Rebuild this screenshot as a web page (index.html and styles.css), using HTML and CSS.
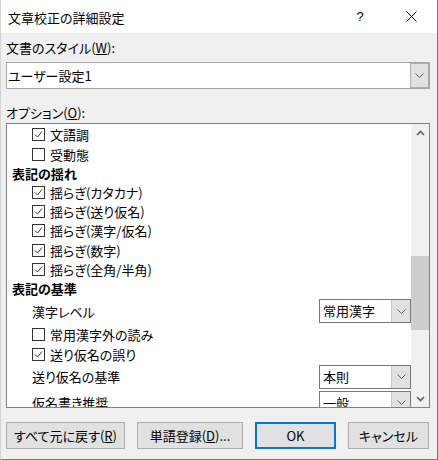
FILE: index.html
```html
<!DOCTYPE html>
<html lang="ja">
<head>
<meta charset="utf-8">
<title>文章校正の詳細設定</title>
<link rel="stylesheet" href="styles.css">
</head>
<body>
<div class="dialog">
  <div class="titlebar">
    <span class="title">文章校正の詳細設定</span>
    <span class="help">?</span>
    <svg class="close" width="11" height="11" viewBox="0 0 11 11"><path d="M0.5 0.5 L10.5 10.5 M10.5 0.5 L0.5 10.5" stroke="#000" stroke-width="1" fill="none"/></svg>
  </div>
  <div class="content">
    <div class="label">文書のスタイル(<u>W</u>):</div>
    <div class="combo-big">
      <span class="combo-text">ユーザー設定1</span>
      <span class="drop-big"><svg width="9" height="5" viewBox="0 0 9 5"><path d="M0.5 0.5 L4.5 4.5 L8.5 0.5" stroke="#606060" fill="none"/></svg></span>
    </div>
    <div class="label label-opt">オプション(<u>O</u>):</div>
    <div class="list">
      <div class="list-content">
        <div class="check-row"><span class="cb"><svg width="11" height="11" viewBox="0 0 11 11"><path d="M2 5.5 L4.5 8 L9 2.5" stroke="#333" fill="none"/></svg></span><span>文語調</span></div>
        <div class="check-row"><span class="cb"></span><span>受動態</span></div>
        <div class="heading">表記の揺れ</div>
        <div class="check-row"><span class="cb"><svg width="11" height="11" viewBox="0 0 11 11"><path d="M2 5.5 L4.5 8 L9 2.5" stroke="#333" fill="none"/></svg></span><span>揺らぎ(カタカナ)</span></div>
        <div class="check-row"><span class="cb"><svg width="11" height="11" viewBox="0 0 11 11"><path d="M2 5.5 L4.5 8 L9 2.5" stroke="#333" fill="none"/></svg></span><span>揺らぎ(送り仮名)</span></div>
        <div class="check-row"><span class="cb"><svg width="11" height="11" viewBox="0 0 11 11"><path d="M2 5.5 L4.5 8 L9 2.5" stroke="#333" fill="none"/></svg></span><span>揺らぎ(漢字/仮名)</span></div>
        <div class="check-row"><span class="cb"><svg width="11" height="11" viewBox="0 0 11 11"><path d="M2 5.5 L4.5 8 L9 2.5" stroke="#333" fill="none"/></svg></span><span>揺らぎ(数字)</span></div>
        <div class="check-row"><span class="cb"><svg width="11" height="11" viewBox="0 0 11 11"><path d="M2 5.5 L4.5 8 L9 2.5" stroke="#333" fill="none"/></svg></span><span>揺らぎ(全角/半角)</span></div>
        <div class="heading">表記の基準</div>
        <div class="combo-row first">
          <span>漢字レベル</span>
          <div class="combo">
            <span class="combo-text">常用漢字</span>
            <span class="drop"><svg width="9" height="5" viewBox="0 0 9 5"><path d="M0.5 0.5 L4.5 4.5 L8.5 0.5" stroke="#606060" fill="none"/></svg></span>
          </div>
        </div>
        <div class="check-row"><span class="cb"></span><span>常用漢字外の読み</span></div>
        <div class="check-row"><span class="cb"><svg width="11" height="11" viewBox="0 0 11 11"><path d="M2 5.5 L4.5 8 L9 2.5" stroke="#333" fill="none"/></svg></span><span>送り仮名の誤り</span></div>
        <div class="combo-row">
          <span>送り仮名の基準</span>
          <div class="combo">
            <span class="combo-text">本則</span>
            <span class="drop"><svg width="9" height="5" viewBox="0 0 9 5"><path d="M0.5 0.5 L4.5 4.5 L8.5 0.5" stroke="#606060" fill="none"/></svg></span>
          </div>
        </div>
        <div class="combo-row">
          <span>仮名書き推奨</span>
          <div class="combo">
            <span class="combo-text">一般</span>
            <span class="drop"><svg width="9" height="5" viewBox="0 0 9 5"><path d="M0.5 0.5 L4.5 4.5 L8.5 0.5" stroke="#606060" fill="none"/></svg></span>
          </div>
        </div>
      </div>
      <div class="scrollbar">
        <div class="arrow"><svg width="9" height="6" viewBox="0 0 9 6"><path d="M1 5 L4.5 1.5 L8 5" stroke="#606060" stroke-width="1.7" fill="none"/></svg></div>
        <div class="track"><div class="thumb"></div></div>
        <div class="arrow"><svg width="9" height="6" viewBox="0 0 9 6"><path d="M1 1 L4.5 4.5 L8 1" stroke="#606060" stroke-width="1.7" fill="none"/></svg></div>
      </div>
    </div>
    <div class="buttons">
      <div class="btn w1">すべて元に戻す(<u>R</u>)</div>
      <div class="btn w2">単語登録(<u>D</u>)...</div>
      <div class="btn w3 default">OK</div>
      <div class="btn w3">キャンセル</div>
    </div>
  </div>
</div>
</body>
</html>
```
FILE: styles.css
```css
* { box-sizing: border-box; }
html, body { margin: 0; padding: 0; background: #fff; }
body {
  font-family: "Noto Sans CJK JP", "Noto Sans", sans-serif;
  font-size: 13px;
  font-feature-settings: "palt";
  color: #000;
}
.dialog {
  width: 438px;
  height: 460px;
  background: #f0f0f0;
  border-right: 1px solid #7a7a7a;
  border-bottom: 1px solid #7a7a7a;
  border-left: 1px solid #d4d4d4;
  display: flex;
  flex-direction: column;
}
.titlebar {
  height: 33px;
  background: #fff;
  display: flex;
  align-items: center;
  padding-left: 7px;
  padding-top: 2px;
}
.title { font-size: 13px; }
.help {
  margin-left: auto;
  width: 12px;
  text-align: center;
  font-family: "Liberation Sans", sans-serif;
  font-size: 13px;
  margin-right: 40px;
  margin-top: -3px;
}
.close { margin-right: 20px; margin-top: -2px; }
.content {
  flex: 1;
  padding: 6px 7px 0 5px;
}
.label { height: 18px; line-height: 18px; }
.label-opt { margin-top: 15px; }
.combo-big {
  margin-top: 5px;
  height: 27px;
  border: 1px solid #a5a5a5;
  background: #fff;
  display: flex;
}
.combo-big .combo-text { flex: 1; line-height: 25px; padding-left: 1px; }
.drop-big {
  width: 19px;
  background: #e1e1e1;
  border: 1px solid #adadad;
  display: flex;
  align-items: center;
  justify-content: center;
}
.list {
  margin-top: 1px;
  height: 285px;
  border: 1px solid #828282;
  background: #fff;
  display: flex;
}
.list-content {
  flex: 1;
  overflow: hidden;
  padding-top: 1.4px;
  padding-left: 5px;
}
.heading {
  height: 19.2px;
  line-height: 19.2px;
  font-weight: bold;
}
.check-row {
  height: 19.2px;
  display: flex;
  align-items: center;
  padding-left: 20px;
  gap: 5px;
}
.cb {
  width: 13px;
  height: 13px;
  border: 1px solid #333;
  background: #fff;
  display: flex;
  flex: none;
}
.combo-row {
  height: 26px;
  display: flex;
  align-items: center;
  padding-left: 20px;
  flex: none;
}
.combo-row.first { margin-bottom: 1.2px; }
.combo {
  margin-left: auto;
  width: 92px;
  height: 24px;
  border: 1px solid #7a7a7a;
  background: #fff;
  display: flex;
  flex: none;
}
.combo .combo-text { flex: 1; line-height: 22px; padding-left: 3px; }
.drop {
  width: 19px;
  background: #e1e1e1;
  border-left: 1px solid #c6c6c6;
  display: flex;
  align-items: center;
  justify-content: center;
}
.scrollbar {
  width: 18px;
  background: #f0f0f0;
  display: flex;
  flex-direction: column;
}
.arrow {
  height: 17px;
  display: flex;
  align-items: center;
  justify-content: center;
}
.track { flex: 1; padding-top: 115px; }
.thumb { height: 74px; background: #cdcdcd; }
.buttons {
  display: flex;
  gap: 12px;
  margin-top: 14px;
}
.btn {
  height: 27px;
  border: 1px solid #adadad;
  background: #e1e1e1;
  display: flex;
  align-items: center;
  justify-content: center;
}
.btn.default { border: 2px solid #0078d7; }
.w1 { width: 119px; }
.w2 { width: 106px; }
.w3 { width: 81px; }
```
